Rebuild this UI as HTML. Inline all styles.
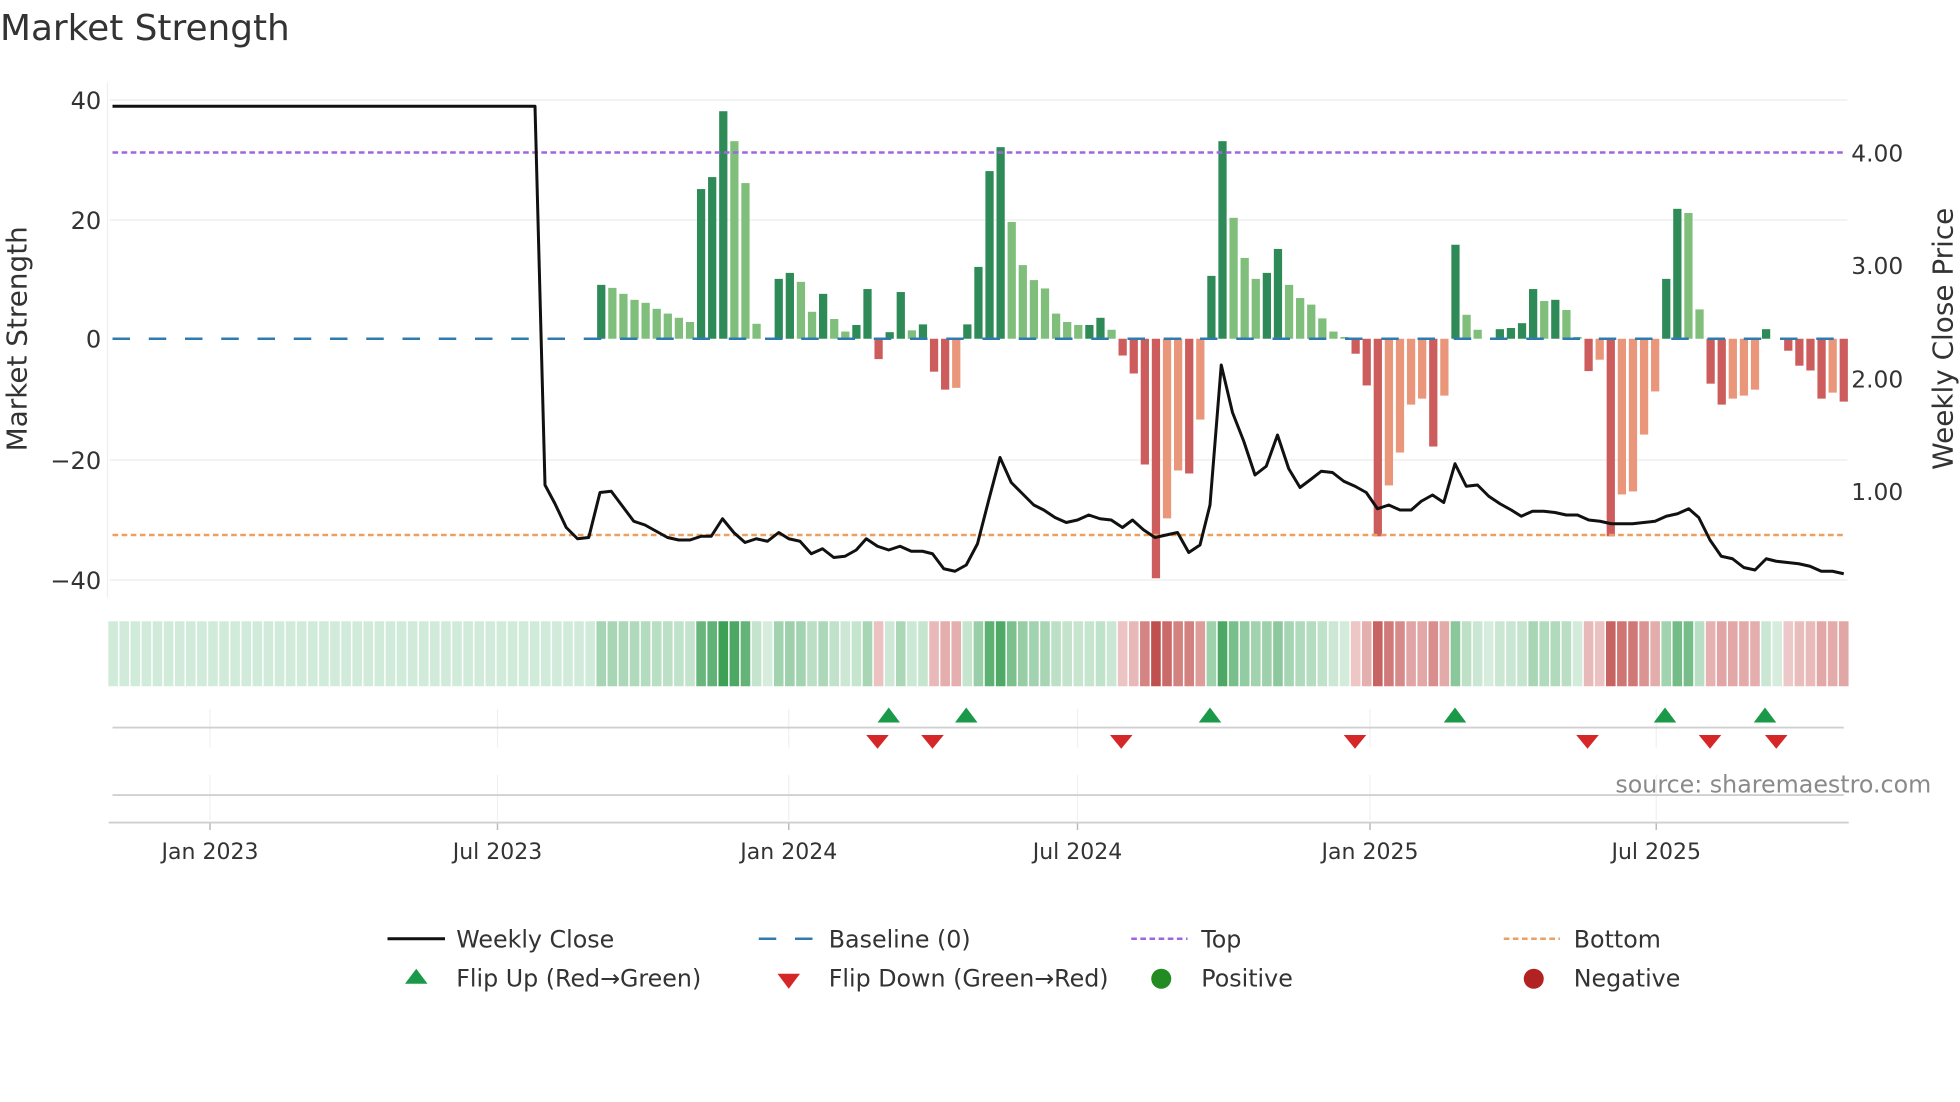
<!DOCTYPE html>
<html><head><meta charset="utf-8"><style>
html,body{margin:0;padding:0;background:#fff;width:1960px;height:1102px;overflow:hidden}
svg{display:block;font-family:"DejaVu Sans","Liberation Sans",sans-serif}
text{fill:#333}
</style></head><body>
<svg id="s" width="1960" height="1102" viewBox="0 0 1568 881.6" xmlns="http://www.w3.org/2000/svg">
<text x="0" y="32" font-size="28.7">Market Strength</text>
<g stroke="#ececec" stroke-width="1">
<line x1="88" y1="80" x2="1478" y2="80"/><line x1="88" y1="176" x2="1478" y2="176"/>
<line x1="88" y1="368" x2="1478" y2="368"/><line x1="88" y1="464" x2="1478" y2="464"/>
</g>
<line x1="86" y1="66" x2="86" y2="478" stroke="#eee"/>
<g font-size="19.3" text-anchor="end">
<text x="81" y="87">40</text><text x="81" y="183">20</text><text x="81" y="278">0</text>
<text x="81" y="375">−20</text><text x="81" y="471">−40</text>
</g>
<g font-size="18.7">
<text x="1481" y="129">4.00</text><text x="1481" y="219">3.00</text>
<text x="1481" y="310">2.00</text><text x="1481" y="400">1.00</text>
</g>
<text transform="translate(21,271) rotate(-90)" font-size="22.3" text-anchor="middle">Market Strength</text>
<text transform="translate(1562,271) rotate(-90)" font-size="22.3" text-anchor="middle">Weekly Close Price</text>
<g id="bars"></g>
<line x1="90" y1="271" x2="1476" y2="271" stroke="#2f7bb0" stroke-width="2" stroke-dasharray="14 15"/>
<line x1="90" y1="122" x2="1476" y2="122" stroke="#a066dd" stroke-width="2" stroke-dasharray="4.5 2.8"/>
<line x1="90" y1="428" x2="1476" y2="428" stroke="#eca060" stroke-width="2" stroke-dasharray="4.5 2.8"/>
<polyline id="price" fill="none" stroke="#111" stroke-width="2.4" stroke-linejoin="round"/>
<g id="heat"></g>
<g stroke="#eef0f2" stroke-width="1" id="vg"></g>
<line x1="90" y1="582" x2="1475" y2="582" stroke="#d0d0d0" stroke-width="1.5"/>
<line x1="90" y1="636" x2="1475" y2="636" stroke="#d0d0d0" stroke-width="1.5"/>
<line x1="87" y1="658" x2="1479" y2="658" stroke="#cfcfcf" stroke-width="1.5"/>
<g id="mk"></g>
<text x="1545" y="634" font-size="19" text-anchor="end" style="fill:#8a8a8a">source: sharemaestro.com</text>
<g font-size="17.6" text-anchor="middle" id="tl"></g>
<g font-size="19">
<line x1="310" y1="751" x2="356" y2="751" stroke="#111" stroke-width="2.4"/>
<text x="365" y="758">Weekly Close</text>
<line x1="607" y1="751" x2="652" y2="751" stroke="#2f7bb0" stroke-width="2" stroke-dasharray="14 15"/>
<text x="663" y="758">Baseline (0)</text>
<line x1="905" y1="751" x2="950" y2="751" stroke="#a066dd" stroke-width="2" stroke-dasharray="4.5 2.8"/>
<text x="961" y="758">Top</text>
<line x1="1203" y1="751" x2="1248" y2="751" stroke="#eca060" stroke-width="2" stroke-dasharray="4.5 2.8"/>
<text x="1259" y="758">Bottom</text>
<polygon points="324,787 342,787 333,775" fill="#1a9a48"/>
<text x="365" y="789">Flip Up (Red→Green)</text>
<polygon points="622,779 640,779 631,791" fill="#d62728"/>
<text x="663" y="789">Flip Down (Green→Red)</text>
<circle cx="929" cy="783" r="8" fill="#228b22"/>
<text x="961" y="789">Positive</text>
<circle cx="1227" cy="783" r="8" fill="#b22222"/>
<text x="1259" y="789">Negative</text>
</g>
</svg>
<script>
var NS="http://www.w3.org/2000/svg";
function el(t,a,p){var e=document.createElementNS(NS,t);for(var k in a)e.setAttribute(k,a[k]);p.appendChild(e);return e;}
var V="D9 L8.5 L7.5 L6.5 L6 L5 L4.2 L3.5 L2.8 D25 D27 D38 L33 L26 L2.5 N0 D10 D11 L9.5 L4.5 D7.5 L3.3 L1.2 D2.3 D8.3 R-3.4 D1.1 D7.8 L1.4 D2.4 R-5.5 R-8.5 S-8.2 D2.4 D12 D28 D32 L19.5 L12.3 L9.8 L8.4 L4.2 L2.8 L2.3 D2.3 D3.5 L1.5 R-2.8 R-5.8 R-21 R-40 S-30 S-22 R-22.5 S-13.5 D10.5 D33 L20.2 L13.5 L10 D11 D15 L9 L6.8 L5.7 L3.4 L1.2 L0.3 R-2.5 R-7.8 R-33 S-24.5 S-19 S-11 S-10 R-18 S-9.5 D15.7 L4 L1.5 N0 D1.6 D1.8 D2.6 D8.3 L6.3 D6.5 L4.8 L0.3 R-5.4 S-3.5 R-33 S-26 S-25.5 S-16 S-8.8 D10 D21.7 L21 L4.9 R-7.5 R-11 S-10 S-9.5 S-8.5 D1.6 N0 R-2 R-4.5 R-5.3 R-10 S-9 R-10.5".split(" ");
var n=V.length,x0=481,x1=1475,st=(x1-x0)/(n-1),sc=4.79,base=271;
var col={D:"#2e8b57",L:"#7fbf7b",R:"#cd5c5c",S:"#e9967a",N:"#7fbf7b"};
var bars=document.getElementById("bars"),heat=document.getElementById("heat");
var vals=[];
V.forEach(function(s,i){var t=s[0],v=parseFloat(s.slice(1));vals.push(v);var x=x0+i*st;
 if(v==0)return;var h=Math.abs(v)*sc;el("rect",{x:x-3.3,y:v>0?base-h:base,width:6.6,height:h,fill:col[t]},bars);});
function mix(a,b,t){var r=[];for(var i=0;i<3;i++)r.push(Math.round(a[i]+(b[i]-a[i])*t));return"rgb("+r.join(",")+")";}
for(var i=-44;i<n;i++){var x=x0+i*st,v=i<0?0.5:vals[i],c;
 if(v>=0){c=mix([214,237,222],[60,160,85],Math.min(1,Math.pow(v/38,0.8)));}
 else{c=mix([242,212,212],[192,80,77],Math.min(1,Math.pow(-v/40,0.8)));}
 el("rect",{x:x-st/2+0.6,y:497,width:st-1.2,height:52,fill:c},heat);}
var P=[[90,85],[428,85],[436,388],[444,403],[453,422],[462,431],[471,430],[480,394],[489,393],[498,405],[507,417],[516,420],[525,425],[534,430],[543,432],[552,432],[561,429],[569,429],[578,415],[587,426],[596,434],[605,431],[614,433],[623,426],[631,431],[640,433],[649,443],[658,439],[667,446],[676,445],[685,440],[693,431],[702,437],[711,440],[720,437],[729,441],[738,441],[746,443],[755,455],[764,457],[773,452],[782,435],[791,400],[800,366],[809,386],[818,395],[827,404],[835,408],[844,414],[853,418],[862,416],[871,412],[880,415],[889,416],[898,422],[906,416],[915,424],[924,430],[933,428],[942,426],[951,442],[960,436],[968,404],[977,292],[986,330],[995,353],[1004,380],[1013,373],[1022,348],[1031,375],[1040,390],[1048,384],[1057,377],[1066,378],[1075,385],[1084,389],[1093,394],[1102,407],[1111,404],[1120,408],[1129,408],[1137,401],[1146,396],[1155,402],[1164,371],[1173,389],[1182,388],[1191,397],[1200,403],[1209,408],[1217,413],[1226,409],[1235,409],[1244,410],[1253,412],[1262,412],[1271,416],[1280,417],[1289,419],[1297,419],[1306,419],[1315,418],[1324,417],[1333,413],[1342,411],[1351,407],[1359,414],[1368,432],[1377,445],[1386,447],[1395,454],[1404,456],[1413,447],[1421,449],[1430,450],[1439,451],[1448,453],[1457,457],[1466,457],[1475,459]];
document.getElementById("price").setAttribute("points",P.map(function(p){return p.join(",")}).join(" "));
var T=[[168,"Jan 2023"],[398,"Jul 2023"],[631,"Jan 2024"],[862,"Jul 2024"],[1096,"Jan 2025"],[1325,"Jul 2025"]];
var vg=document.getElementById("vg"),tl=document.getElementById("tl");
T.forEach(function(t){el("line",{x1:t[0],y1:567,x2:t[0],y2:598},vg);el("line",{x1:t[0],y1:620,x2:t[0],y2:656},vg);
 el("line",{x1:t[0],y1:658,x2:t[0],y2:664,stroke:"#bbb","stroke-width":1.2},vg);
 var e=el("text",{x:t[0],y:687},tl);e.textContent=t[1];});
var mk=document.getElementById("mk");
[711,773,968,1164,1332,1412].forEach(function(x){el("polygon",{points:(x-9)+",578 "+(x+9)+",578 "+x+",566",fill:"#1a9a48"},mk);});
[702,746,897,1084,1270,1368,1421].forEach(function(x){el("polygon",{points:(x-9)+",588 "+(x+9)+",588 "+x+",599",fill:"#d62728"},mk);});
</script>
</body></html>
